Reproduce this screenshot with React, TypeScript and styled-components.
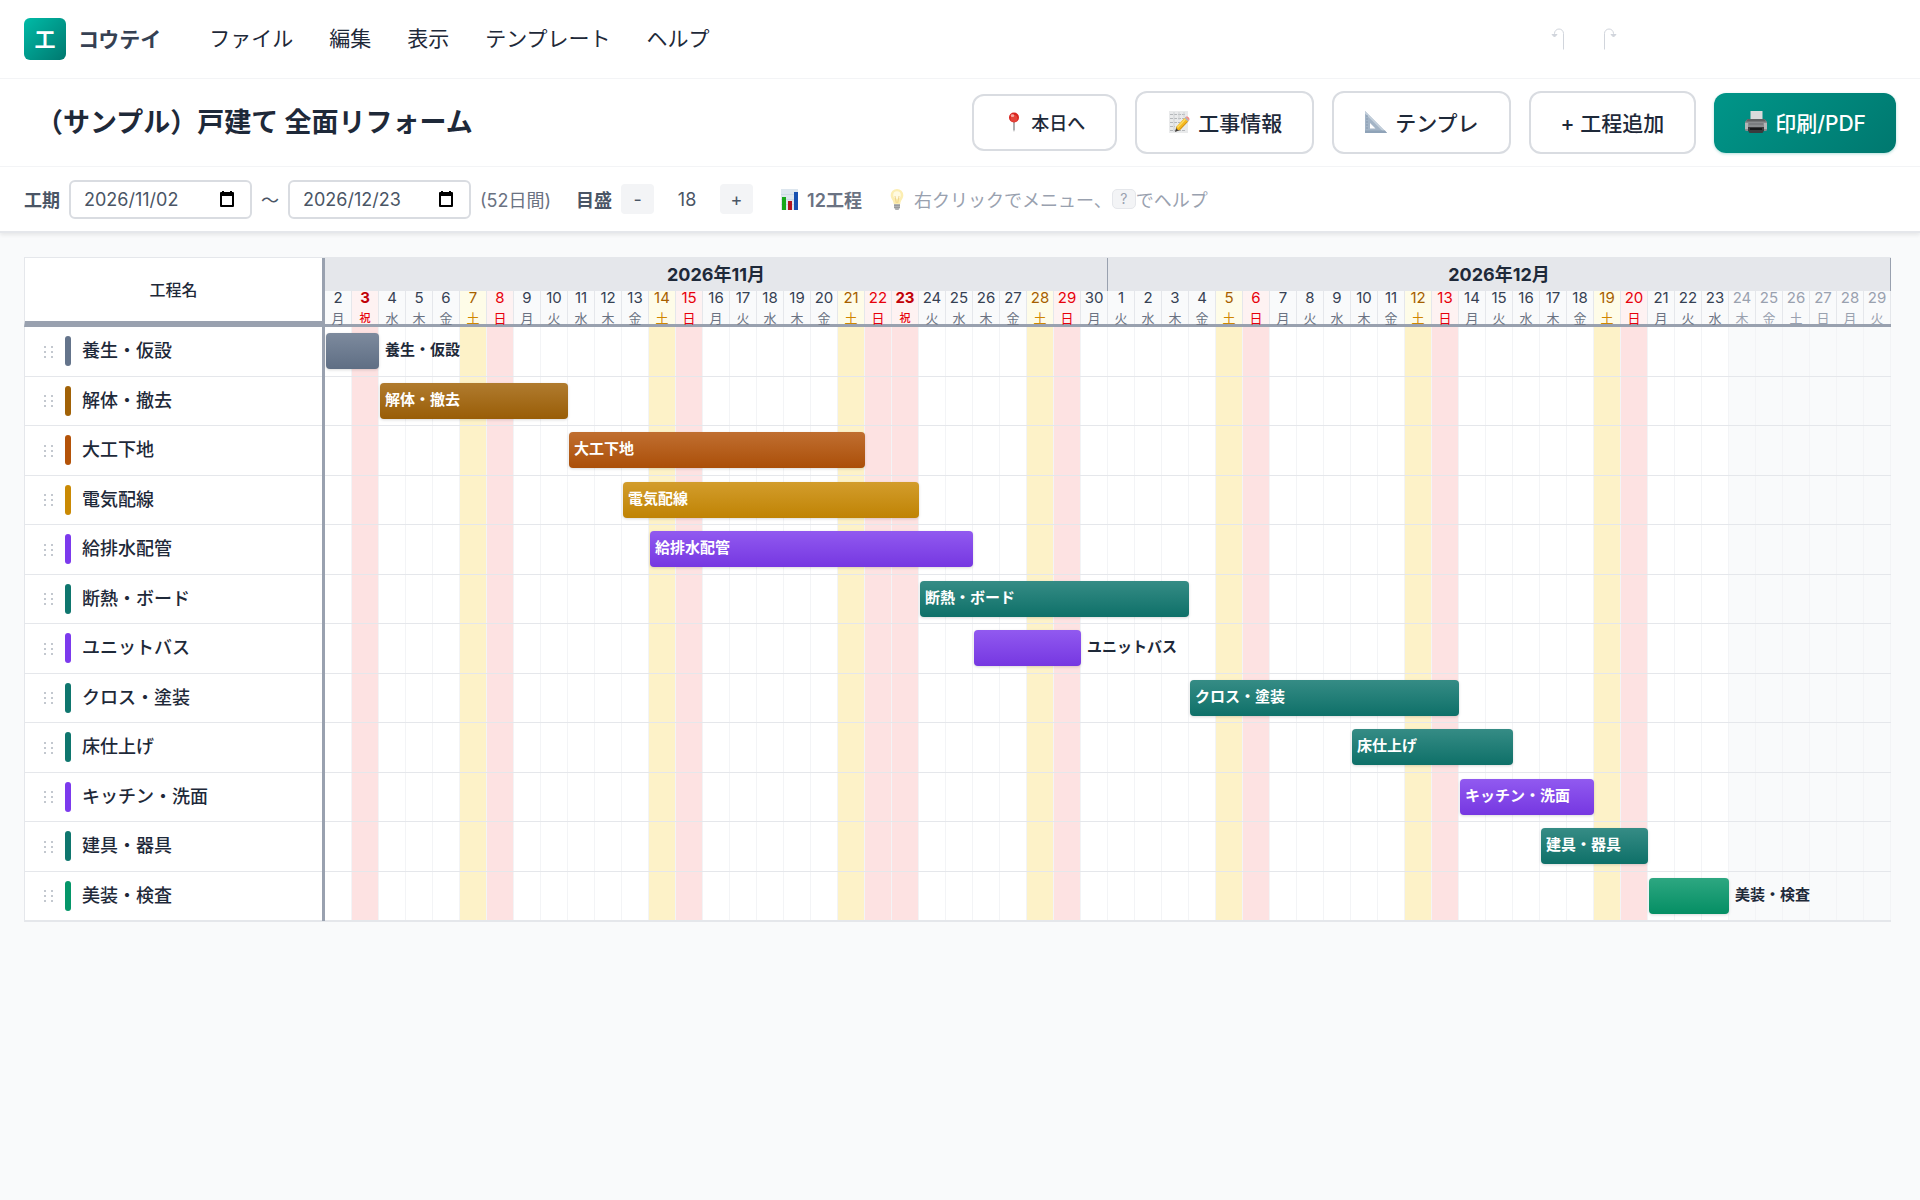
import React, { useState } from "react";
import styled, { createGlobalStyle, css } from "styled-components";

const GlobalStyle = createGlobalStyle`
  *, *::before, *::after { box-sizing: border-box; }
  body {
    margin: 0;
    min-height: 100vh;
    background: #f9fafb;
    color: #1e2939;
    font-family: Inter, "Noto Sans CJK JP", sans-serif;
    font-size: 18px;
  }
  button, input { font: inherit; color: inherit; }
  button { cursor: pointer; }
`;

const TopPanel = styled.header`
  background: #fff;
  border-bottom: 2px solid #e5e7eb;
  box-shadow: 0 2px 4px rgba(0, 0, 0, 0.08);
`;

const MenuBar = styled.div`
  display: flex;
  align-items: center;
  height: 79px;
  padding: 0 24px;
  border-bottom: 1px solid #f3f4f6;
`;

const Logo = styled.span`
  display: grid;
  place-items: center;
  width: 42px;
  height: 42px;
  padding-bottom: 2px;
  border-radius: 6px;
  background: linear-gradient(135deg, #00bba7, #00786f);
  color: #fff;
  font-size: 21px;
  font-weight: 700;
`;

const Brand = styled.span`
  margin-left: 12px;
  padding-bottom: 2px;
  color: #364153;
  font-size: 21px;
  font-weight: 700;
`;

const Menu = styled.nav`
  display: flex;
  margin-left: 30px;
`;

const MenuItem = styled.button`
  border: 0;
  padding: 6px 18px;
  background: none;
  font-size: 21px;
  line-height: 30px;
  white-space: nowrap;
`;

const History = styled.div`
  display: flex;
  gap: 16px;
  margin-left: auto;
  margin-right: 268px;
`;

const HistoryButton = styled.button`
  display: grid;
  place-items: center;
  width: 36px;
  height: 36px;
  border: 0;
  padding: 0;
  background: none;
  color: #d1d5dc;
`;

const TitleBar = styled.div`
  display: flex;
  align-items: center;
  gap: 18px;
  height: 88px;
  padding: 0 24px;
  border-bottom: 1px solid #f3f4f6;
`;

const Title = styled.h1`
  flex: 1;
  margin: 0;
  padding-left: 12px;
  font-size: 27px;
  font-weight: 700;
  line-height: 40px;
`;

const ActionButton = styled.button<{ $kind?: "small" | "primary" }>`
  display: flex;
  align-items: center;
  justify-content: center;
  gap: 7px;
  height: 63px;
  padding: 0 30px 2px;
  border: 2px solid #d9dce1;
  border-radius: 12px;
  background: #fff;
  font-size: 21px;
  font-weight: 500;
  white-space: nowrap;
  ${(p) =>
    p.$kind === "small" &&
    css`
      height: 57px;
      font-size: 18px;
    `}
  ${(p) =>
    p.$kind === "primary" &&
    css`
      height: 60px;
      border: 0;
      background: linear-gradient(135deg, #009689, #00786f);
      box-shadow: 0 1px 3px rgba(0, 150, 137, 0.3);
      color: #fff;
    `}
`;

const SettingsBar = styled.div`
  display: flex;
  align-items: center;
  height: 64px;
  padding: 0 24px;
  color: #4a5565;
  white-space: nowrap;
`;

const FieldLabel = styled.label`
  margin-right: 9px;
  font-weight: 600;
`;

const DateBox = styled.span`
  display: flex;
  align-items: center;
  width: 183px;
  height: 39px;
  padding: 0 13px;
  border: 2px solid #d9dce1;
  border-radius: 6px;
  background: #fff;
`;

const DateInput = styled.input`
  flex: 1;
  min-width: 0;
  border: 0;
  padding: 0;
  background: none;
  outline: 0;
`;

const PickerButton = styled.button`
  display: flex;
  border: 0;
  padding: 0 3px;
  background: none;
  color: #000;
`;

const Tilde = styled.span`
  width: 36px;
  text-align: center;
`;

const Duration = styled.span`
  margin: 0 25px 0 9px;
  color: #6a7282;
`;

const ScaleGroup = styled.div`
  display: flex;
  align-items: center;
`;

const StepButton = styled.button`
  width: 33px;
  height: 30px;
  border: 0;
  border-radius: 4px;
  padding: 0;
  background: #f3f4f6;
`;

const ScaleValue = styled.output`
  width: 66px;
  text-align: center;
`;

const Count = styled.span`
  display: flex;
  align-items: center;
  gap: 8px;
  margin-left: 27px;
  color: #6a7282;
  font-weight: 600;
`;

const Hint = styled.span`
  display: flex;
  align-items: center;
  margin-left: 26px;
  color: #99a1af;
`;

const HintIcon = styled.span`
  display: flex;
  margin-right: 8px;
  opacity: 0.65;
`;

const Key = styled.kbd`
  width: 24px;
  border: 1px solid #e5e7eb;
  border-radius: 5px;
  background: #f3f4f6;
  font: inherit;
  font-size: 14px;
  line-height: 18px;
  text-align: center;
`;

const Main = styled.main`
  padding: 24px;
  overflow-x: auto;
`;

const Chart = styled.section`
  display: grid;
  grid-template-columns: 301px max-content;
  width: max-content;
  border-top: 1px solid #e5e7eb;
  border-bottom: 1px solid #e5e7eb;
`;

const NameHeader = styled.div`
  display: grid;
  place-items: center;
  padding-bottom: 2px;
  border-left: 1px solid #e5e7eb;
  border-right: 3px solid #99a1af;
  border-bottom: 6px solid #99a1af;
  background: #fff;
  font-size: 16px;
  font-weight: 500;
`;

const Timeline = styled.div<{ $col: number; $count: number }>`
  display: grid;
  grid-template-columns: repeat(${(p) => p.$count}, ${(p) => p.$col}px);
`;

const TimelineHeader = styled(Timeline)`
  grid-template-rows: 33px 33px;
  border-bottom: 3px solid #99a1af;
`;

const Month = styled.div`
  border-right: 1px solid #99a1af;
  background: #e5e7eb;
  font-size: 18px;
  font-weight: 700;
  line-height: 33px;
  text-align: center;
`;

type Kind = "work" | "sat" | "sun" | "holiday" | "out";

const headBg: Record<Kind, string> = { work: "#f9fafb", sat: "#fefce8", sun: "#fef2f2", holiday: "#fef2f2", out: "#f9fafb" };
const headInk: Record<Kind, string> = { work: "#364153", sat: "#a65f00", sun: "#e7000b", holiday: "#c10007", out: "#99a1af" };
const weekInk: Record<Kind, string> = { work: "#6a7282", sat: "#d08700", sun: "#e7000b", holiday: "#e7000b", out: "#99a1af" };
const cellBg: Record<Kind, string> = { work: "#fff", sat: "#fdf2c8", sun: "#fde2e2", holiday: "#fde2e2", out: "#f9fafb" };

const Day = styled.div<{ $kind: Kind }>`
  display: flex;
  flex-direction: column;
  align-items: center;
  gap: 6px;
  border-right: 1px solid #e5e7eb;
  background: ${(p) => headBg[p.$kind]};
  color: ${(p) => headInk[p.$kind]};
  font-size: 15px;
  font-weight: ${(p) => (p.$kind === "holiday" ? 700 : 400)};
  line-height: 14px;
`;

const Weekday = styled.span<{ $kind: Kind }>`
  color: ${(p) => weekInk[p.$kind]};
  font-size: ${(p) => (p.$kind === "holiday" ? 11 : 13)}px;
  font-weight: ${(p) => (p.$kind === "holiday" ? 500 : 400)};
  line-height: 15px;
`;

const Rows = styled.div`
  display: grid;
  grid-auto-rows: 1fr;
  min-height: 594px;
`;

const NameRows = styled(Rows)`
  border-left: 1px solid #e5e7eb;
  border-right: 3px solid #99a1af;
  background: #fff;
`;

const NameRow = styled.div`
  display: flex;
  align-items: center;
  padding: 0 18px;
  border-bottom: 1px solid #e5e7eb;
`;

const TaskName = styled.span`
  padding-bottom: 4px;
  font-weight: 500;
`;

const Grip = styled.svg`
  width: 11px;
  height: 15px;
  fill: #c3c8cf;
`;

const Swatch = styled.span<{ $color: string }>`
  width: 6px;
  height: 30px;
  margin: 0 11px;
  border-radius: 3px;
  background: ${(p) => p.$color};
`;

const BarRow = styled(Timeline)`
  grid-template-rows: 1fr;
  border-bottom: 1px solid #e5e7eb;
`;

const Cell = styled.div<{ $kind: Kind }>`
  grid-row: 1;
  border-right: 1px solid #f3f4f6;
  background: ${(p) => cellBg[p.$kind]};
`;

const barText = css`
  grid-row: 1;
  align-self: center;
  height: 36px;
  font-size: 15px;
  font-weight: 600;
  line-height: 34px;
  white-space: nowrap;
  z-index: 1;
`;

const Bar = styled.div<{ $start: number; $days: number; $color: string }>`
  ${barText}
  grid-column: ${(p) => p.$start + 1} / span ${(p) => p.$days};
  margin-left: 1px;
  padding: 0 5px;
  border-radius: 4px;
  background: linear-gradient(rgba(255, 255, 255, 0.16), rgba(0, 0, 0, 0.05)), ${(p) => p.$color};
  box-shadow: 0 1px 3px rgba(0, 0, 0, 0.15);
  color: #fff;
`;

const OuterLabel = styled.span<{ $start: number }>`
  ${barText}
  grid-column: ${(p) => p.$start + 1} / span 5;
  padding-left: 6px;
`;

const FIRST = new Date(2026, 10, 2);
const DAY_COUNT = 58;
const IN_RANGE = 52;
const HOLIDAYS = ["11/3", "11/23"];

const days = Array.from({ length: DAY_COUNT }, (_, i) => {
  const d = new Date(FIRST.getFullYear(), FIRST.getMonth(), FIRST.getDate() + i);
  const holiday = HOLIDAYS.includes(`${d.getMonth() + 1}/${d.getDate()}`);
  const w = d.getDay();
  const kind: Kind = i >= IN_RANGE ? "out" : holiday ? "holiday" : w === 6 ? "sat" : w === 0 ? "sun" : "work";
  return { date: d.getDate(), label: holiday ? "祝" : "日月火水木金土"[w], kind };
});

const months = [
  { label: "2026年11月", span: 29 },
  { label: "2026年12月", span: 29 },
];

const tasks = [
  { name: "養生・仮設", color: "#64748b", start: 0, days: 2, outer: true },
  { name: "解体・撤去", color: "#a16207", start: 2, days: 7 },
  { name: "大工下地", color: "#b45309", start: 9, days: 11 },
  { name: "電気配線", color: "#ca8a04", start: 11, days: 11 },
  { name: "給排水配管", color: "#7c3aed", start: 12, days: 12 },
  { name: "断熱・ボード", color: "#0f766e", start: 22, days: 10 },
  { name: "ユニットバス", color: "#7c3aed", start: 24, days: 4, outer: true },
  { name: "クロス・塗装", color: "#0f766e", start: 32, days: 10 },
  { name: "床仕上げ", color: "#0f766e", start: 38, days: 6 },
  { name: "キッチン・洗面", color: "#7c3aed", start: 42, days: 5 },
  { name: "建具・器具", color: "#0f766e", start: 45, days: 4 },
  { name: "美装・検査", color: "#059669", start: 49, days: 3, outer: true },
];

const UndoArrow = ({ flip }: { flip?: boolean }) => (
  <svg width="14" height="22" viewBox="0 0 14 22" fill="none" stroke="currentColor" aria-hidden="true">
    <g transform={flip ? "matrix(-1 0 0 1 14 0)" : undefined}>
      <path d="M12.5 21.5V5.5a4.5 4.5 0 0 0-9 0V8" />
      <path d="M1 6.500h5L3.500 9z" fill="currentColor" />
    </g>
  </svg>
);

const CalendarIcon = () => (
  <svg width="14" height="16" viewBox="0 0 14 16" aria-hidden="true">
    <path fill="currentColor" d="M2 0h2v1h6V0h2v1h1a1 1 0 0 1 1 1v13a1 1 0 0 1-1 1H1a1 1 0 0 1-1-1V2a1 1 0 0 1 1-1h1zM2 5v9h10V5z" />
  </svg>
);

const PinIcon = () => (
  <svg width="20" height="20" viewBox="0 0 20 20" aria-hidden="true">
    <path d="M9.300 9h1.400v8.500L10 20l-.7-2.500z" fill="#8d8f92" />
    <circle cx="10" cy="5.500" r="5" fill="#d8241f" />
    <circle cx="10" cy="6.500" r="3.500" fill="#e4443a" />
    <ellipse cx="8.500" cy="3.700" rx="1.800" ry="1.400" fill="#f8a9a0" />
  </svg>
);

const MemoIcon = () => (
  <svg width="24" height="24" viewBox="0 0 24 24" aria-hidden="true">
    <rect x="2" y="1" width="19" height="22" fill="#e9eaeb" />
    <path d="M3 4.500h16M3 8.500h14M3 12.500h10M3 16.500h5M3 20.500h15" stroke="#b4b7ba" strokeDasharray="3 1" />
    <path d="M7 2v20M12 2v8M17 2v5" stroke="#cfd2d4" />
    <path d="M8 22l1.500-5.500 3.500 3.500z" fill="#3d3a36" />
    <path d="M9.500 16.500L17.500 8l3.500 3.500-8 8.500c-2 .8-4.500-1.500-3.500-3.500z" fill="#f5b81f" />
    <path d="M10.500 17.500l8-8.500" stroke="#fbdc66" strokeWidth="1.300" />
    <path d="M12.600 19.800l8.200-8.400" stroke="#c98a12" />
    <path d="M17.500 8l1-1.100 3.500 3.500-1 1.100z" fill="#a8adb3" />
    <path d="M18.500 6.900c2-1.800 5.200 1.500 3.500 3.500z" fill="#ee8d8a" />
  </svg>
);

const RulerIcon = () => (
  <svg width="24" height="24" viewBox="0 0 24 24" aria-hidden="true">
    <path fillRule="evenodd" d="M1 1l22 22H1zM6 13v5.500h5.500z" fill="#a3b4c6" />
    <path d="M1 1l22 22h-2.500L1 3.500z" fill="#c3cfdb" />
    <path d="M1 20.500h20l2 2.500H1z" fill="#8fa3b8" />
    <path d="M2 6h2M2 9h2M2 12h2M2 15h2M2 18h2" stroke="#7d91a8" strokeWidth=".7" />
  </svg>
);

const PrinterIcon = () => (
  <svg width="24" height="24" viewBox="0 0 24 24" aria-hidden="true">
    <path d="M6.500 1h12v9h-12z" fill="#d9dadb" />
    <path d="M3.500 9h17L23 12v7.500a1.500 1.500 0 0 1-1.500 1.500h-19A1.500 1.500 0 0 1 1 19.500V12z" fill="#8a8c8f" />
    <path d="M3.500 9h17l1.500 2.500H2z" fill="#5f6163" />
    <path d="M1 13h3v6H1zM20 13h3v6h-3z" fill="#b3b5b7" />
    <path d="M4 17h16v3.500l-1.500 2.500h-13L4 20.500z" fill="#3a3b3d" />
    <path d="M6 18h12v2H6z" fill="#17181a" />
    <path d="M5 14h14" stroke="#6d6f72" />
  </svg>
);

const ChartIcon = () => (
  <svg width="19" height="21" viewBox="0 0 19 21" aria-hidden="true">
    <rect x="1" width="17" height="21" fill="#dde6ee" />
    <path d="M1 5.500h17M1 10.500h17M1 15.500h17" stroke="#c6d3df" strokeWidth=".7" />
    <rect x="2" y="8" width="4" height="13" fill="#17a81a" />
    <rect x="8" y="12" width="4" height="9" fill="#b3151f" />
    <rect x="14" y="3" width="4" height="18" fill="#1750b0" />
  </svg>
);

const BulbIcon = () => (
  <svg width="18" height="21" viewBox="0 0 18 21" aria-hidden="true">
    <path d="M9 0a6.300 6.300 0 0 1 6.300 6.300c0 3.500-2.600 4.700-3 8.700H5.700c-.4-4-3-5.200-3-8.700A6.300 6.300 0 0 1 9 0z" fill="#fbe58a" />
    <circle cx="9" cy="6" r="3.800" fill="#fff8d2" />
    <path d="M7 7l1.300 7M11 7l-1.300 7" stroke="#e0b23c" strokeWidth=".8" />
    <path d="M6 15h6v3.500L10.500 21h-3L6 18.500z" fill="#85888c" />
    <path d="M6 16.500h6M6 18.500h6" stroke="#55585c" strokeWidth=".7" />
  </svg>
);

const DateField = ({ id, label, value }: { id: string; label: string; value: string }) => (
  <DateBox>
    <DateInput id={id} aria-label={label} defaultValue={value} />
    <PickerButton aria-label={`${label}を選択`}>
      <CalendarIcon />
    </PickerButton>
  </DateBox>
);

export default function App() {
  const [scale, setScale] = useState(18);
  const col = Math.round(scale * 1.5);

  return (
    <>
      <GlobalStyle />
      <TopPanel>
        <MenuBar>
          <Logo>工</Logo>
          <Brand>コウテイ</Brand>
          <Menu>
            {["ファイル", "編集", "表示", "テンプレート", "ヘルプ"].map((m) => (
              <MenuItem key={m}>{m}</MenuItem>
            ))}
          </Menu>
          <History>
            <HistoryButton aria-label="元に戻す"><UndoArrow /></HistoryButton>
            <HistoryButton aria-label="やり直し"><UndoArrow flip /></HistoryButton>
          </History>
        </MenuBar>

        <TitleBar>
          <Title>（サンプル）戸建て 全面リフォーム</Title>
          <ActionButton $kind="small"><PinIcon />本日へ</ActionButton>
          <ActionButton><MemoIcon />工事情報</ActionButton>
          <ActionButton><RulerIcon />テンプレ</ActionButton>
          <ActionButton>+ 工程追加</ActionButton>
          <ActionButton $kind="primary"><PrinterIcon />印刷/PDF</ActionButton>
        </TitleBar>

        <SettingsBar>
          <FieldLabel htmlFor="start">工期</FieldLabel>
          <DateField id="start" label="開始日" value="2026/11/02" />
          <Tilde>～</Tilde>
          <DateField id="end" label="終了日" value="2026/12/23" />
          <Duration>(52日間)</Duration>
          <ScaleGroup>
            <FieldLabel as="span">目盛</FieldLabel>
            <StepButton aria-label="縮小" onClick={() => setScale(scale - 2)}>-</StepButton>
            <ScaleValue>{scale}</ScaleValue>
            <StepButton aria-label="拡大" onClick={() => setScale(scale + 2)}>+</StepButton>
          </ScaleGroup>
          <Count><ChartIcon />{tasks.length}工程</Count>
          <Hint><HintIcon><BulbIcon /></HintIcon>右クリックでメニュー、<Key>?</Key>でヘルプ</Hint>
        </SettingsBar>
      </TopPanel>

      <Main>
        <Chart>
          <NameHeader>工程名</NameHeader>
          <TimelineHeader $col={col} $count={DAY_COUNT}>
            {months.map((m) => (
              <Month key={m.label} style={{ gridColumn: `span ${m.span}` }}>{m.label}</Month>
            ))}
            {days.map((d, i) => (
              <Day key={i} $kind={d.kind}>
                {d.date}
                <Weekday $kind={d.kind}>{d.label}</Weekday>
              </Day>
            ))}
          </TimelineHeader>

          <NameRows>
            {tasks.map((t) => (
              <NameRow key={t.name}>
                <Grip viewBox="0 0 11 15" aria-hidden="true">
                  {[2, 7, 12].map((y) => (
                    <React.Fragment key={y}>
                      <rect x="1" y={y} width="2" height="2" />
                      <rect x="8" y={y} width="2" height="2" />
                    </React.Fragment>
                  ))}
                </Grip>
                <Swatch $color={t.color} />
                <TaskName>{t.name}</TaskName>
              </NameRow>
            ))}
          </NameRows>
          <Rows>
            {tasks.map((t) => (
              <BarRow key={t.name} $col={col} $count={DAY_COUNT}>
                {days.map((d, i) => (
                  <Cell key={i} $kind={d.kind} style={{ gridColumn: i + 1 }} />
                ))}
                <Bar $start={t.start} $days={t.days} $color={t.color}>{!t.outer && t.name}</Bar>
                {t.outer && <OuterLabel $start={t.start + t.days}>{t.name}</OuterLabel>}
              </BarRow>
            ))}
          </Rows>
        </Chart>
      </Main>
    </>
  );
}
